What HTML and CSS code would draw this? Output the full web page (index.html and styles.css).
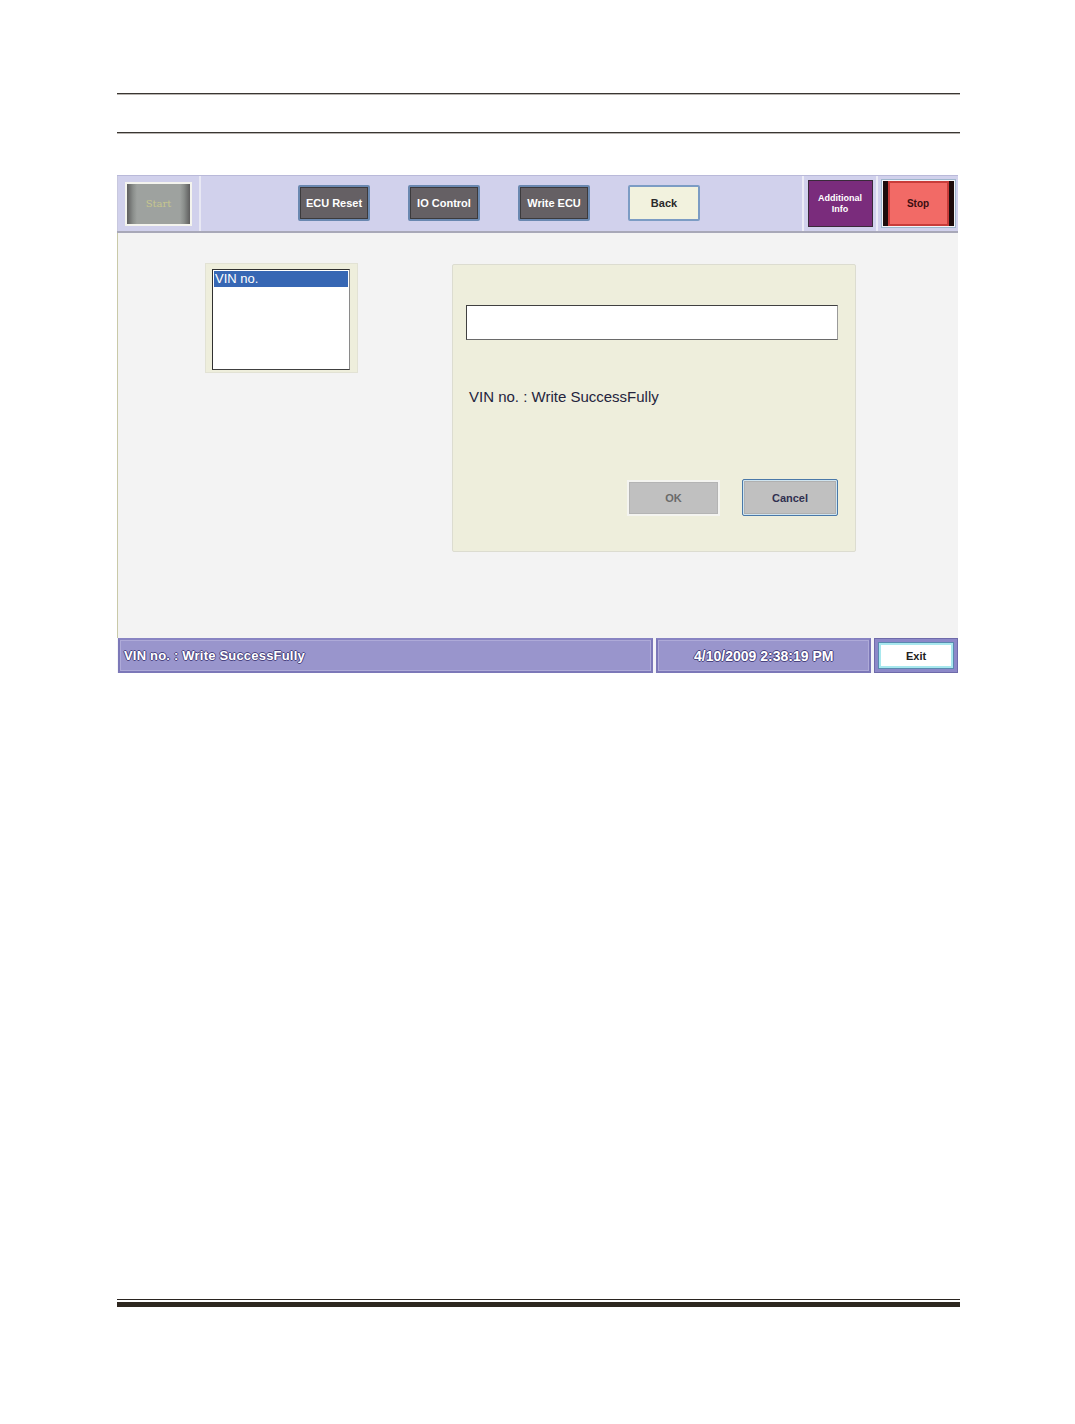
FILE: index.html
```html
<!DOCTYPE html>
<html>
<head>
<meta charset="utf-8">
<link rel="stylesheet" href="styles.css">
</head>
<body>
<div class="page">
  <div class="rule rule-top"></div>
  <div class="rule rule-second"></div>

  <div class="frame">
    <div class="toolbar">
      <div class="cell-start">
        <div class="btn-start">Start</div>
      </div>
      <div class="cell-mid">
        <div class="tbtn">ECU Reset</div>
        <div class="tbtn">IO Control</div>
        <div class="tbtn">Write ECU</div>
        <div class="tbtn tbtn-back">Back</div>
      </div>
      <div class="cell-info">
        <div class="btn-info">Additional<br>Info</div>
      </div>
      <div class="cell-stop">
        <div class="btn-stop"><div class="stop-inner">Stop</div></div>
      </div>
    </div>

    <div class="main">
      <div class="vin-panel">
        <div class="listbox">
          <div class="list-item sel">VIN no.</div>
        </div>
      </div>
      <div class="dialog">
        <div class="input"></div>
        <div class="msg">VIN no. : Write SuccessFully</div>
        <div class="dlg-buttons">
          <div class="dbtn dbtn-ok">OK</div>
          <div class="dbtn dbtn-cancel">Cancel</div>
        </div>
      </div>
    </div>

    <div class="statusbar">
      <div class="status-msg">VIN no. : Write SuccessFully</div>
      <div class="status-date">4/10/2009 2:38:19 PM</div>
      <div class="status-exit"><div class="exit-btn">Exit</div></div>
    </div>
  </div>

  <div class="bottom-rules">
    <div class="rule-thin"></div>
    <div class="rule-thick"></div>
  </div>
</div>
</body>
</html>
```

FILE: styles.css
```css
html, body {
  margin: 0;
  padding: 0;
  background: #ffffff;
}
body {
  font-family: "Liberation Sans", Arial, sans-serif;
}
.page {
  width: 843px;
  margin-left: 117px;
  padding-top: 93px;
}
.rule {
  height: 1px;
  background: #3a3632;
  border-bottom: 1px solid #b8b4b0;
}
.rule-second {
  margin-top: 37px;
}
.frame {
  margin-top: 41px;
  width: 841px;
  height: 498px;
  display: flex;
  flex-direction: column;
}

/* toolbar */
.toolbar {
  height: 55px;
  background: #d1d1ec;
  border-top: 1px solid #b9b9d9;
  border-bottom: 2px solid #a8a8b8;
  display: flex;
  box-sizing: content-box;
}
.cell-start {
  width: 81px;
  border-left: 1px solid #c8c8de;
  border-right: 2px solid #e8e8f4;
  display: flex;
  align-items: center;
  justify-content: center;
}
.btn-start {
  width: 63px;
  height: 40px;
  border: 2px solid #f4f4ee;
  background: linear-gradient(to right, #5e5e5e 0, #8a8e8b 6px, #9ea29f 10px, #9ea29f calc(100% - 10px), #8a8e8b calc(100% - 6px), #5e5e5e 100%);
  color: #c6c68e;
  font-size: 10px;
  font-family: "DejaVu Serif", serif;
  display: flex;
  align-items: center;
  justify-content: center;
}
.cell-mid {
  flex: 1;
  display: flex;
  align-items: flex-start;
  padding-top: 9px;
  padding-left: 97px;
  gap: 38px;
  border-right: 2px solid #ececf6;
}
.tbtn {
  width: 68px;
  height: 32px;
  background: #656064;
  border: 2px solid #6a88b0;
  box-shadow: inset 0 0 0 1px #3c3a3c;
  border-radius: 2px;
  color: #ffffff;
  font-weight: bold;
  font-size: 11px;
  display: flex;
  align-items: center;
  justify-content: center;
}
.tbtn-back {
  background: #f2f2de;
  color: #2a2a2a;
  border-color: #7c9cc4;
  box-shadow: none;
}
.cell-info {
  width: 72px;
  display: flex;
  align-items: center;
  justify-content: center;
  border-right: 2px solid #ececf6;
}
.btn-info {
  width: 63px;
  height: 45px;
  background: #7a2c7c;
  border: 1px solid #3a2a3a;
  color: #ffffff;
  font-weight: bold;
  font-size: 9px;
  line-height: 11px;
  text-align: center;
  display: flex;
  align-items: center;
  justify-content: center;
}
.cell-stop {
  flex: 0 0 80px;
  display: flex;
  align-items: center;
  justify-content: center;
}
.btn-stop {
  width: 71px;
  height: 45px;
  border: 1px solid #9eb6cc;
  background: #f4f4f8;
  padding: 1px;
  box-sizing: content-box;
  display: flex;
}
.stop-inner {
  flex: 1;
  background: #f26a66;
  border-left: 5px solid #1e0c0c;
  border-right: 5px solid #1e0c0c;
  box-shadow: inset 0 0 0 2px #c83c3a;
  color: #3a0e10;
  font-weight: bold;
  font-size: 10px;
  display: flex;
  align-items: center;
  justify-content: center;
}

/* main */
.main {
  flex: 1;
  background: #f3f3f3;
  border-left: 1px solid #c9c9a8;
  display: flex;
  align-items: flex-start;
  padding-top: 30px;
  padding-left: 87px;
}
.vin-panel {
  width: 153px;
  height: 110px;
  background: #eeeedc;
  border: 1px solid #e2e2d4;
  box-sizing: border-box;
  padding: 5px 0 0 6px;
}
.listbox {
  width: 138px;
  height: 101px;
  background: #ffffff;
  border: 1px solid #303030;
  border-right-color: #8a8a8a;
  border-bottom-color: #404040;
  box-sizing: border-box;
  padding: 1px;
}
.list-item.sel {
  background: #3767b4;
  color: #ffffff;
  font-size: 13px;
  height: 16px;
  line-height: 16px;
  padding-left: 1px;
}
.dialog {
  margin-left: 94px;
  margin-top: 1px;
  width: 404px;
  height: 288px;
  background: #eeeedc;
  border: 1px solid #dcdcd0;
  border-radius: 2px;
  box-sizing: border-box;
  padding: 40px 17px 0 13px;
  display: flex;
  flex-direction: column;
}
.input {
  height: 35px;
  background: #ffffff;
  border: 1px solid #404040;
  border-right-color: #9a9a9a;
  border-bottom-color: #6a6a6a;
  box-sizing: border-box;
}
.msg {
  margin-top: 48px;
  padding-left: 3px;
  font-size: 15px;
  color: #24243c;
  line-height: 17px;
}
.dlg-buttons {
  margin-top: 74px;
  display: flex;
  justify-content: flex-end;
  gap: 22px;
}
.dbtn {
  height: 37px;
  box-sizing: border-box;
  background: #c0c0c0;
  font-weight: bold;
  font-size: 11px;
  display: flex;
  align-items: center;
  justify-content: center;
}
.dbtn-ok {
  width: 93px;
  height: 36px;
  border: 2px solid #f4f4f0;
  box-shadow: inset 0 0 0 1px #b4b4b4;
  color: #6a6a6a;
  margin-top: 1px;
}
.dbtn-cancel {
  width: 96px;
  border: 1px solid #4a78a8;
  box-shadow: inset 0 0 0 1px #cfe4f0, inset 0 0 0 2px #b0b0b0;
  border-radius: 2px;
  color: #303050;
}

/* status */
.statusbar {
  height: 35px;
  background: #f4f4f8;
  display: flex;
  gap: 3px;
}
.status-msg, .status-date {
  background: #9995cc;
  border: 2px solid #7c78b8;
  border-top-color: #8884c2;
  box-shadow: inset 0 0 0 1px #aeaad8;
  box-sizing: border-box;
  color: #ffffff;
  font-weight: bold;
  display: flex;
  align-items: center;
  text-shadow: -1px 0 #4a4480, 1px 0 #4a4480, 0 -1px #4a4480, 0 1px #4a4480;
}
.status-msg {
  width: 536px;
  margin-left: 1px;
  font-size: 13px;
  letter-spacing: 0.2px;
  padding-left: 4px;
}
.status-date {
  width: 215px;
  font-size: 14px;
  justify-content: center;
}
.status-exit {
  width: 84px;
  background: #8c88c8;
  border: 1px solid #6e6aaa;
  box-sizing: border-box;
  padding: 3px;
  display: flex;
}
.exit-btn {
  flex: 1;
  background: #ffffff;
  border: 1px solid #5a8ab0;
  box-shadow: inset 2px 2px 0 #a8e8ee, inset -2px -2px 0 #a8e8ee;
  color: #202020;
  font-weight: bold;
  font-size: 11px;
  display: flex;
  align-items: center;
  justify-content: center;
}

/* bottom rules */
.bottom-rules {
  margin-top: 626px;
}
.rule-thin {
  height: 1px;
  background: #2a2420;
}
.rule-thick {
  margin-top: 2px;
  height: 5px;
  background: #2e2820;
}
```
